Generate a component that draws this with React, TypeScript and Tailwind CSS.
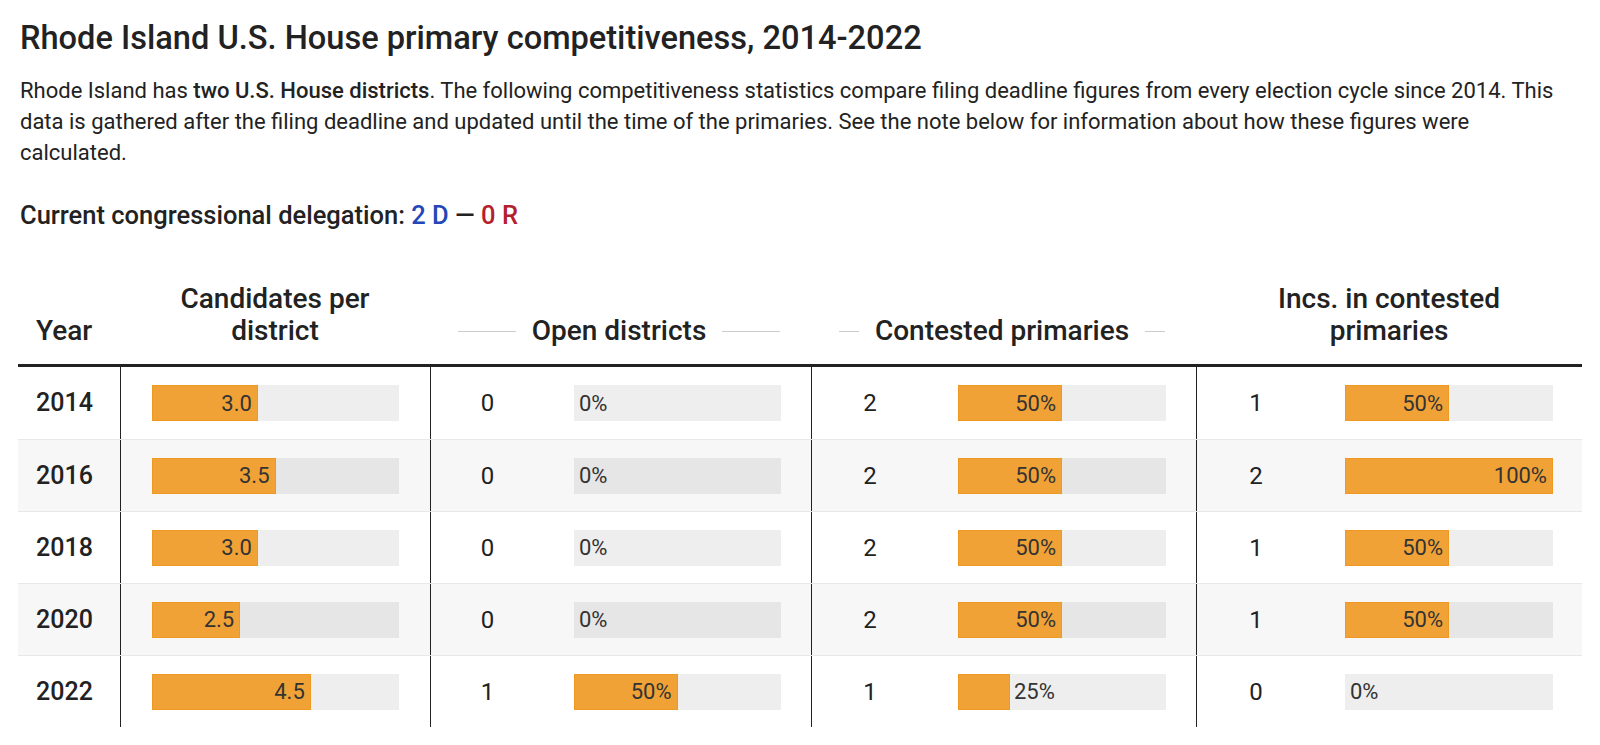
const rows = [
  { year: 2014, cand: 3.0, open: 0, contested: 2, incs: 1, openPct: 0, contPct: 50, incPct: 50 },
  { year: 2016, cand: 3.5, open: 0, contested: 2, incs: 2, openPct: 0, contPct: 50, incPct: 100 },
  { year: 2018, cand: 3.0, open: 0, contested: 2, incs: 1, openPct: 0, contPct: 50, incPct: 50 },
  { year: 2020, cand: 2.5, open: 0, contested: 2, incs: 1, openPct: 0, contPct: 50, incPct: 50 },
  { year: 2022, cand: 4.5, open: 1, contested: 1, incs: 0, openPct: 50, contPct: 25, incPct: 0 },
];

const MAX_CAND = 7;

type BarProps = {
  pct: number;
  label: string;
  shaded: boolean;
  width: string;
};

const Bar = ({ pct, label, shaded, width }: BarProps) => {
  const inside = pct >= 30;
  return (
    <div
      className={`flex h-[36px] items-center text-[22px] text-[#333] ${width} ${
        shaded ? "bg-[#e6e6e6]" : "bg-[#eeeeee]"
      }`}
    >
      {pct > 0 && (
        <div
          className="flex h-full items-center justify-end border border-[#ee9a22] bg-[#f0a236] pr-[5px]"
          style={{ width: `${pct}%` }}
        >
          {inside && <span>{label}</span>}
        </div>
      )}
      {!inside && <span className={pct > 0 ? "ml-[4px]" : "ml-[5px]"}>{label}</span>}
    </div>
  );
};

type StatProps = {
  count: number;
  pct: number;
  shaded: boolean;
  numWidth: string;
  trackWidth: string;
};

const StatCell = ({ count, pct, shaded, numWidth, trackWidth }: StatProps) => (
  <div className="flex items-center border-l border-[#222]">
    <div className={`${numWidth} text-center text-[24px]`}>{count}</div>
    <div className="ml-[30px]">
      <Bar pct={pct} label={`${pct}%`} shaded={shaded} width={trackWidth} />
    </div>
  </div>
);

const GroupHeader = ({ title }: { title: string }) => (
  <div className="flex items-center gap-[16px] pl-[28px] pr-[31px]">
    <div className="h-px flex-1 bg-[#cccccc]" />
    <span className="whitespace-nowrap">{title}</span>
    <div className="h-px flex-1 bg-[#cccccc]" />
  </div>
);

export default function App() {
  return (
    <div className="min-h-screen bg-white px-[18px] pt-[18px] font-['Roboto',sans-serif] text-[#222]">
      <h1 className="pl-[2px] text-[32.6px] font-medium leading-[40px]">
        Rhode Island U.S. House primary competitiveness, 2014-2022
      </h1>
      <p className="mt-[17px] pl-[2px] pr-[16px] text-[22px] leading-[31px] text-[#222]">
        Rhode Island has <strong className="font-medium">two U.S. House districts</strong>. The
        following competitiveness statistics compare filing deadline figures from every election
        cycle since 2014. This data is gathered after the filing deadline and updated until the
        time of the primaries. See the note below for information about how these figures were
        calculated.
      </p>
      <div className="mt-[31px] pl-[2px] text-[25.5px] font-medium leading-[32px]">
        Current congressional delegation: <span className="text-[#2347b8]">2 D</span> —{" "}
        <span className="text-[#b4202e]">0 R</span>
      </div>

      <div className="mt-[52px] w-[1564px]">
        {/* header */}
        <div className="grid grid-cols-[102px_310px_381px_385px_386px] items-end border-b-[3px] border-[#222] pb-[17px] text-[28px] font-medium leading-[32px]">
          <div className="pl-[18px]">Year</div>
          <div className="text-center">
            Candidates per
            <br />
            district
          </div>
          <GroupHeader title="Open districts" />
          <GroupHeader title="Contested primaries" />
          <div className="text-center">
            Incs. in contested
            <br />
            primaries
          </div>
        </div>

        {/* body */}
        {rows.map((r, i) => {
          const shaded = i % 2 === 1;
          return (
            <div
              key={r.year}
              className={`grid h-[72px] grid-cols-[102px_310px_381px_385px_386px] ${
                i > 0 ? "border-t border-[#e8e8e8]" : ""
              } ${shaded ? "bg-[#f7f7f7]" : "bg-white"}`}
            >
              <div className="flex items-center pl-[18px] text-[25px] font-medium">{r.year}</div>
              <div className="flex items-center border-l border-[#222] px-[31px]">
                <Bar
                  pct={(r.cand / MAX_CAND) * 100}
                  label={r.cand.toFixed(1)}
                  shaded={shaded}
                  width="w-full"
                />
              </div>
              <StatCell
                count={r.open}
                pct={r.openPct}
                shaded={shaded}
                numWidth="w-[113px]"
                trackWidth="w-[207px]"
              />
              <StatCell
                count={r.contested}
                pct={r.contPct}
                shaded={shaded}
                numWidth="w-[116px]"
                trackWidth="w-[208px]"
              />
              <StatCell
                count={r.incs}
                pct={r.incPct}
                shaded={shaded}
                numWidth="w-[118px]"
                trackWidth="w-[208px]"
              />
            </div>
          );
        })}
      </div>
    </div>
  );
}
